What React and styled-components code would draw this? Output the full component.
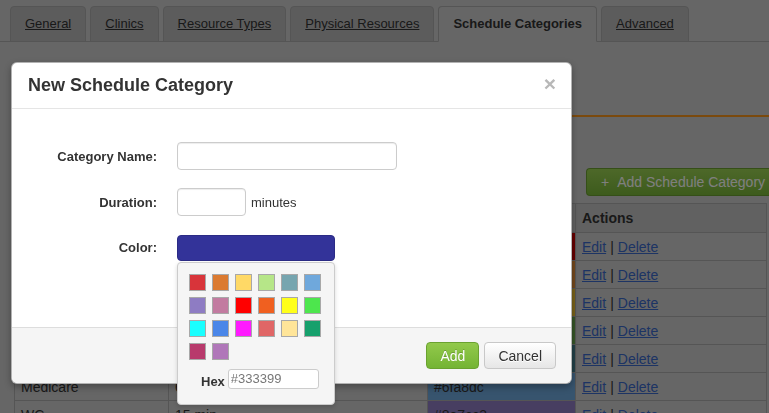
import React from 'react';
import styled, { createGlobalStyle } from 'styled-components';

const GlobalStyle = createGlobalStyle`
  *, *::before, *::after { box-sizing: border-box; }
  html, body { margin: 0; padding: 0; }
  body {
    font-family: "Liberation Sans", Arial, Helvetica, sans-serif;
    background: #cccccc;
    color: #333;
    overflow: hidden;
  }
`;

const Page = styled.div`
  width: 769px;
  height: 413px;
  overflow: hidden;
`;

const TabBar = styled.ul`
  display: flex;
  margin: 0;
  padding: 6px 0 0 10px;
  list-style: none;
  border-bottom: 1px solid #aaa;
`;

const Tab = styled.li`
  margin-right: 4px;
  margin-bottom: -1px;
  height: 36px;
  line-height: 34px;
  padding: 0 14px;
  font-size: 13px;
  white-space: nowrap;
  border: 1px solid #aaa;
  border-bottom-color: ${p => (p.$active ? '#cccccc' : '#aaa')};
  border-radius: 4px 4px 0 0;
  background: ${p => (p.$active ? '#cccccc' : '#b9b9b9')};

  a {
    color: #333;
    text-decoration: ${p => (p.$active ? 'none' : 'underline')};
    font-weight: ${p => (p.$active ? 'bold' : 'normal')};
  }
`;

const PageHeader = styled.div`
  margin-left: 14px;
  height: 75px;
  border-bottom: 2px solid #f7941d;
`;

const Toolbar = styled.div`
  display: flex;
  justify-content: flex-end;
  margin-top: 51px;
`;

const AddCategoryButton = styled.button`
  flex: none;
  height: 28px;
  width: 183px;
  padding: 0 0 0 14px;
  text-align: left;
  white-space: nowrap;
  font-family: inherit;
  font-size: 14px;
  color: #fff;
  background: linear-gradient(#9bd152, #7ab63a);
  border: 1px solid #6a9e30;
  border-radius: 4px 0 0 4px;
  border-right: none;

  span { margin-right: 8px; }
`;

const Table = styled.table`
  margin: 7px 0 0 14px;
  width: 753px;
  border-collapse: collapse;
  table-layout: fixed;
  font-size: 14px;

  th {
    height: 29px;
    text-align: left;
    padding: 0 6px;
    background: #c2c2c2;
    border: 1px solid #aaa;
  }

  td {
    height: 28px;
    padding: 0 6px;
    border: 1px solid #aaa;
    white-space: nowrap;
  }
`;

const ColorCell = styled.td`
  background: ${p => p.$color};
`;

const Link = styled.a`
  color: #3a68c8;
  text-decoration: underline;
`;

const Sep = styled.span`
  margin: 0 4px;
  color: #333;
`;

const Backdrop = styled.div`
  position: fixed;
  inset: 0;
  background: rgba(0, 0, 0, 0.5);
  z-index: 1;
`;

const Modal = styled.div`
  position: absolute;
  top: 62px;
  left: 11px;
  width: 561px;
  background: #fff;
  border: 1px solid rgba(0, 0, 0, 0.3);
  border-radius: 6px;
  box-shadow: 0 3px 7px rgba(0, 0, 0, 0.3);
  z-index: 2;
`;

const ModalHeader = styled.div`
  height: 46px;
  padding: 0 15px 0 16px;
  display: flex;
  align-items: center;
  justify-content: space-between;
  border-bottom: 1px solid #e5e5e5;
`;

const ModalTitle = styled.h3`
  margin: 0;
  font-size: 18px;
  font-weight: bold;
  color: #333;
`;

const CloseButton = styled.span`
  font-size: 21px;
  font-weight: bold;
  line-height: 20px;
  color: #b8b8b8;
  margin-top: -4px;
`;

const ModalBody = styled.div`
  height: 218px;
  padding-top: 33px;
`;

const Form = styled.div`
  display: grid;
  grid-template-columns: 145px auto;
  column-gap: 20px;
  row-gap: 18px;
  align-items: center;
`;

const Label = styled.label`
  text-align: right;
  font-size: 13px;
  font-weight: bold;
  color: #333;
`;

const Field = styled.div`
  display: flex;
  align-items: center;
  position: relative;
`;

const TextInput = styled.input`
  width: ${p => p.$width}px;
  height: 28px;
  border: 1px solid #ccc;
  border-radius: 4px;
  box-shadow: inset 0 1px 1px rgba(0, 0, 0, 0.075);
  font-family: inherit;
  font-size: 13px;
`;

const Unit = styled.span`
  margin-left: 5px;
  font-size: 13px;
  color: #333;
`;

const ColorButton = styled.div`
  width: 158px;
  height: 26px;
  margin-top: 1px;
  background: #333399;
  border: 1px solid #2b2b85;
  border-radius: 4px;
`;

const Picker = styled.div`
  position: absolute;
  top: 28px;
  left: 0;
  width: 158px;
  padding: 11px 11px 15px;
  background: #f5f5f5;
  border: 1px solid #ccc;
  border-radius: 4px;
  box-shadow: 0 2px 4px rgba(0, 0, 0, 0.15);
  z-index: 3;
`;

const SwatchGrid = styled.div`
  display: grid;
  grid-template-columns: repeat(6, 17px);
  gap: 6px;
`;

const Swatch = styled.div`
  width: 17px;
  height: 17px;
  border: 1px solid #a8a8a8;
  background: ${p => p.$color};
`;

const HexRow = styled.div`
  display: flex;
  align-items: center;
  margin-top: 8px;
  padding-left: 12px;
`;

const HexLabel = styled.span`
  font-size: 13px;
  font-weight: bold;
  color: #333;
  margin-right: 3px;
  padding-top: 6px;
`;

const HexInput = styled.input`
  width: 91px;
  height: 20px;
  padding: 0 2px;
  border: 1px solid #ccc;
  border-radius: 3px;
  font-family: inherit;
  font-size: 13px;
  color: #777;
  background: #fff;
`;

const ModalFooter = styled.div`
  height: 56px;
  padding: 14px 15px;
  display: flex;
  justify-content: flex-end;
  gap: 5px;
  background: #f5f5f5;
  border-top: 1px solid #ddd;
  border-radius: 0 0 6px 6px;
`;

const Button = styled.button`
  height: 27px;
  padding: 0 13px;
  font-family: inherit;
  font-size: 14px;
  border-radius: 4px;
  color: ${p => (p.$primary ? '#fff' : '#333')};
  background: ${p => (p.$primary ? 'linear-gradient(#92c94b, #74b434)' : 'linear-gradient(#ffffff, #e6e6e6)')};
  border: 1px solid ${p => (p.$primary ? '#6aa230' : '#c8c8c8')};
  text-shadow: ${p => (p.$primary ? '0 -1px 0 rgba(0,0,0,0.2)' : '0 1px 0 #fff')};
`;

const tabs = ['General', 'Clinics', 'Resource Types', 'Physical Resources', 'Schedule Categories', 'Advanced'];

const rows = [
  { name: 'New Patient', duration: '60 min', color: '#cc0000' },
  { name: 'Follow Up', duration: '30 min', color: '#e69138' },
  { name: 'Consultation', duration: '45 min', color: '#f1c232' },
  { name: 'Physical Therapy', duration: '30 min', color: '#6aa84f' },
  { name: 'Workers Comp', duration: '30 min', color: '#45818e' },
  { name: 'Medicare', duration: '60 min', color: '#6fa8dc' },
  { name: 'WC', duration: '15 min', color: '#8e7cc3' },
];

const palette = [
  '#d8343a', '#db7a30', '#ffd966', '#b6e688', '#76a5af', '#6fa8dc',
  '#8e7cc3', '#c27ba0', '#ff0000', '#f06020', '#ffff1a', '#4de64d',
  '#1affff', '#4a86e8', '#ff1aff', '#e06666', '#ffe599', '#16a06c',
  '#b83a6c', '#b077b9',
];

export default function App() {
  return (
    <>
      <GlobalStyle />
      <Page>
        <TabBar>
          {tabs.map(t => (
            <Tab key={t} $active={t === 'Schedule Categories'}>
              <a href="#">{t}</a>
            </Tab>
          ))}
        </TabBar>
        <PageHeader />
        <Toolbar>
          <AddCategoryButton><span>+</span>Add Schedule Category</AddCategoryButton>
        </Toolbar>
        <Table>
          <colgroup>
            <col style={{ width: 154 }} />
            <col style={{ width: 259 }} />
            <col style={{ width: 148 }} />
            <col />
          </colgroup>
          <thead>
            <tr>
              <th>Name</th>
              <th>Duration</th>
              <th>Color</th>
              <th>Actions</th>
            </tr>
          </thead>
          <tbody>
            {rows.map(r => (
              <tr key={r.name}>
                <td>{r.name}</td>
                <td>{r.duration}</td>
                <ColorCell $color={r.color}>{r.color}</ColorCell>
                <td>
                  <Link href="#">Edit</Link>
                  <Sep>|</Sep>
                  <Link href="#">Delete</Link>
                </td>
              </tr>
            ))}
          </tbody>
        </Table>
      </Page>

      <Backdrop />

      <Modal>
        <ModalHeader>
          <ModalTitle>New Schedule Category</ModalTitle>
          <CloseButton>×</CloseButton>
        </ModalHeader>
        <ModalBody>
          <Form>
            <Label>Category Name:</Label>
            <Field>
              <TextInput $width={220} />
            </Field>
            <Label>Duration:</Label>
            <Field>
              <TextInput $width={69} />
              <Unit>minutes</Unit>
            </Field>
            <Label>Color:</Label>
            <Field>
              <ColorButton />
              <Picker>
                <SwatchGrid>
                  {palette.map(c => (
                    <Swatch key={c} $color={c} />
                  ))}
                </SwatchGrid>
                <HexRow>
                  <HexLabel>Hex</HexLabel>
                  <HexInput defaultValue="#333399" />
                </HexRow>
              </Picker>
            </Field>
          </Form>
        </ModalBody>
        <ModalFooter>
          <Button $primary>Add</Button>
          <Button>Cancel</Button>
        </ModalFooter>
      </Modal>
    </>
  );
}
